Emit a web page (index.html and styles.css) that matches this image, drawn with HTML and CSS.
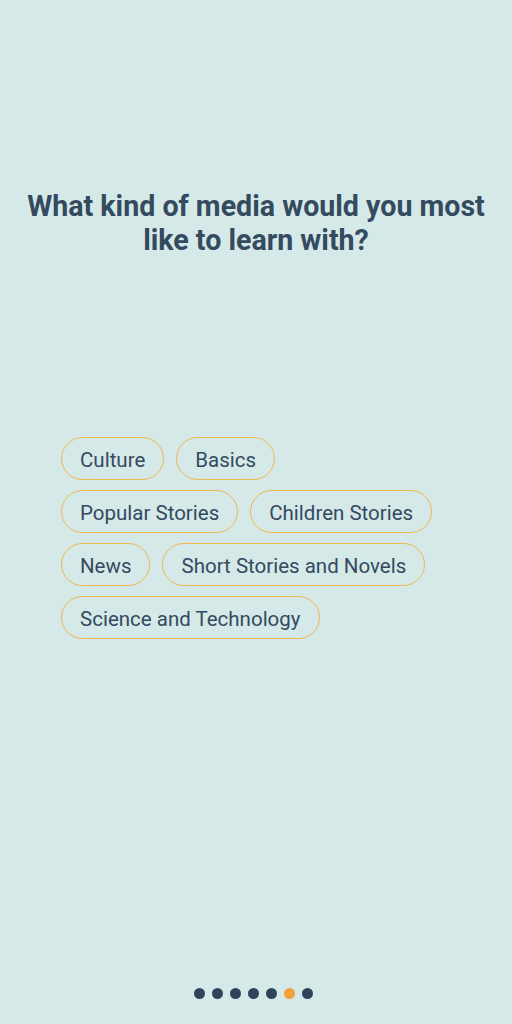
FILE: index.html
```html
<!DOCTYPE html>
<html lang="en">
<head>
  <meta charset="UTF-8"/>
  <meta name="viewport" content="width=device-width, initial-scale=1.0"/>
  <title>Media</title>
  <link rel="stylesheet" href="styles.css">
</head>
<body>
<div class="screen">
  <h1 class="question">What kind of media would you most like to learn with?</h1>
  <div class="chips">
    <span class="chip">Culture</span>
    <span class="chip">Basics</span>
    <span class="chip">Popular Stories</span>
    <span class="chip">Children Stories</span>
    <span class="chip">News</span>
    <span class="chip">Short Stories and Novels</span>
    <span class="chip">Science and Technology</span>
  </div>
  <div class="dots">
    <span class="dot"></span>
    <span class="dot"></span>
    <span class="dot"></span>
    <span class="dot"></span>
    <span class="dot"></span>
    <span class="dot active"></span>
    <span class="dot"></span>
  </div>
</div>
</body>
</html>
```

FILE: styles.css
```css
body {
    margin: 0;
    background-color: #d5e9e9;
    font-family: Roboto, "Liberation Sans", sans-serif;
    color: #344a5e;
}

.screen {
    height: 1024px;
    display: flex;
    flex-direction: column;
}

.question {
    margin: 189px 20px 0;
    font-size: 28.6px;
    line-height: 34px;
    font-weight: 700;
    text-align: center;
}

.chips {
    margin-top: 180px;
    padding: 0 61px;
    display: flex;
    flex-wrap: wrap;
    gap: 10px 12px;
    width: 390px;
}

.chip {
    height: 43px;
    box-sizing: border-box;
    padding: 2px 18px 0;
    border: 1px solid #f0b74a;
    border-radius: 22px;
    font-size: 20.5px;
    display: flex;
    align-items: center;
}

.dots {
    margin-top: auto;
    margin-bottom: 25px;
    padding-right: 6px;
    display: flex;
    justify-content: center;
    gap: 7px;
}

.dot {
    width: 11px;
    height: 11px;
    border-radius: 50%;
    background-color: #2f445a;
}

.dot.active {
    background-color: #f5a03a;
}
```
